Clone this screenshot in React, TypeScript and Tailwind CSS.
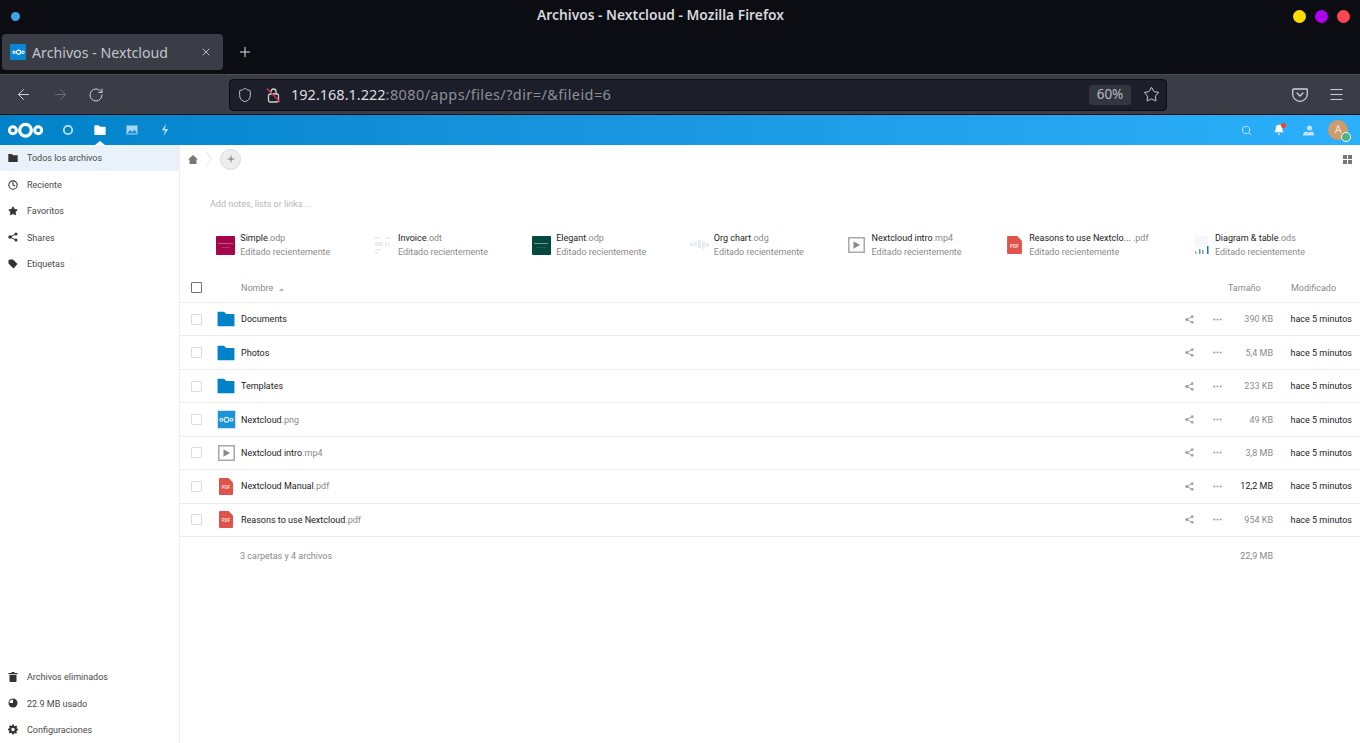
import React from "react";
import { ArrowLeft, ArrowRight, RotateCw, Shield, Star, Menu, Plus, X, Search, Clock, MoreHorizontal } from "lucide-react";

function NcLogo({ w = 38, color = "#fff" }: { w?: number; color?: string }) {
  return (
    <svg width={w} height={w * 0.5} viewBox="0 0 38 19" fill="none" stroke={color}>
      <circle cx="6" cy="9.5" r="3.6" strokeWidth="3" />
      <circle cx="19" cy="9.5" r="6" strokeWidth="3.4" />
      <circle cx="32" cy="9.5" r="3.6" strokeWidth="3" />
    </svg>
  );
}

function Folder({ size = 12, color = "#0082c9" }: { size?: number; color?: string }) {
  return (
    <svg width={size} height={size} viewBox="0 0 16 16" fill={color}>
      <path d="M.5 1.5h5.7L8.2 3.5H15a.5.5 0 0 1 .5.5v10a.5.5 0 0 1-.5.5H1a.5.5 0 0 1-.5-.5z" />
    </svg>
  );
}

function ShareIcon({ size = 10, color = "#a0a0a0" }: { size?: number; color?: string }) {
  return (
    <svg width={size} height={size} viewBox="0 0 10 10" fill={color} stroke={color}>
      <circle cx="8" cy="1.9" r="1.5" strokeWidth="0" />
      <circle cx="8" cy="8.1" r="1.5" strokeWidth="0" />
      <circle cx="2" cy="5" r="1.7" strokeWidth="0" />
      <path d="M8 1.9 2 5l6 3.1" fill="none" strokeWidth="1" />
    </svg>
  );
}

function GearIcon() {
  return (
    <svg width="11" height="11" viewBox="0 0 24 24">
      <path
        fillRule="evenodd"
        fill="#333"
        d="M10 0h4l.7 3.3 2 .8L19.500 2.300l2.800 2.800-1.800 2.800.8 2L24 10v4l-3.300.7-.8 2 1.800 2.800-2.800 2.800-2.800-1.800-2 .8L14 24h-4l-.7-3.300-2-.8-2.800 1.800-2.800-2.800 1.800-2.800-.8-2L0 14v-4l3.300-.7.8-2-1.800-2.800 2.800-2.800 2.800 1.800 2-.8zM12 8a4 4 0 1 0 0 8 4 4 0 0 0 0-8z"
      />
    </svg>
  );
}

function PdfIcon({ w = 14, h = 17 }: { w?: number; h?: number }) {
  return (
    <svg width={w} height={h} viewBox="0 0 14 17">
      <path d="M1 0h8.500L14 4.500V16a1 1 0 0 1-1 1H1a1 1 0 0 1-1-1V1a1 1 0 0 1 1-1z" fill="#e0534a" />
      <text x="7" y="11" textAnchor="middle" fontSize="4.500" fontWeight="700" fill="#fbdcd9" fontFamily="Roboto, sans-serif">PDF</text>
    </svg>
  );
}

function VideoIcon() {
  return (
    <svg width="17" height="16" viewBox="0 0 17 16">
      <rect x="0.75" y="0.75" width="15.5" height="14.5" fill="#fff" stroke="#a8a8a8" strokeWidth="1.5" />
      <path d="M5.500 4.200 12 8l-6.500 3.800z" fill="#8c8c8c" />
    </svg>
  );
}

function PngIcon() {
  return (
    <div className="w-[19px] h-[19px] bg-[#1a93d8] border border-[#cfe4f2] flex items-center justify-center">
      <NcLogo w={15} color="#cdeafb" />
    </div>
  );
}

function SimpleThumb() {
  return (
    <div className="w-[19px] h-[19px] rounded-[1px] bg-[#a5064a] flex flex-col items-center justify-center gap-[3px]">
      <div className="w-[15px] h-px bg-[#c25a86]" />
      <div className="w-[8px] h-px bg-[#b5336b]" />
    </div>
  );
}

function ElegantThumb() {
  return (
    <div className="w-[19px] h-[19px] rounded-[1px] bg-[#04493f] flex flex-col items-center justify-center gap-[3px]">
      <div className="w-[14px] h-px bg-[#6f9c94]" />
      <div className="w-[9px] h-px bg-[#1f6054]" />
    </div>
  );
}

function InvoiceThumb() {
  return (
    <svg width="17" height="19" viewBox="0 0 17 19">
      <g fill="#ececec">
        <rect x="0" y="1" width="6" height="1.500" />
        <rect x="11" y="1" width="5" height="2" />
        <rect x="1" y="6" width="8" height="4" />
        <rect x="11" y="6" width="1.500" height="5" />
        <rect x="14" y="6" width="1.500" height="5" />
        <rect x="1" y="13" width="6" height="1.500" />
        <rect x="1" y="16" width="3" height="2" />
      </g>
    </svg>
  );
}

function OrgThumb() {
  return (
    <svg width="19" height="14" viewBox="0 0 19 14">
      <g fill="#e6e9ee">
        <rect x="0" y="5" width="3" height="3" />
        <rect x="4" y="4" width="3" height="4" />
        <rect x="8" y="2" width="3" height="8" />
        <rect x="12" y="3" width="3" height="8" />
        <rect x="16" y="5" width="3" height="4" />
      </g>
    </svg>
  );
}

function SheetThumb() {
  return (
    <svg width="16" height="19" viewBox="0 0 16 19">
      <rect x="1" y="0" width="13" height="11" fill="#f6f7f8" />
      <rect x="1" y="15" width="1.500" height="3" fill="#e8a33d" />
      <rect x="5" y="13" width="1.500" height="5" fill="#2fa8c9" />
      <rect x="8" y="14" width="1.500" height="4" fill="#9aa0a6" />
      <rect x="13" y="10" width="1.500" height="8" fill="#1b7f9e" />
    </svg>
  );
}

function Recent({ thumb, name, ext }: { thumb: React.ReactNode; name: string; ext: string }) {
  return (
    <div className="flex items-center w-[157.7px] h-[28px] shrink-0">
      <div className="w-[24.3px] h-[20px] flex items-center shrink-0">{thumb}</div>
      <div className="leading-[14px]">
        <div className="text-[9px] text-[#222] whitespace-nowrap">
          {name}
          <span className="text-[#8a8a8a]">{ext}</span>
        </div>
        <div className="text-[9px] text-[#8a8a8a] whitespace-nowrap">Editado recientemente</div>
      </div>
    </div>
  );
}

function Row({ icon, name, ext, size, strong }: { icon: React.ReactNode; name: string; ext: string; size: string; strong?: boolean }) {
  return (
    <div className="flex items-center h-[33.45px] border-b border-[#ededed] pr-[8px]">
      <div className="w-[11px] h-[11px] ml-[11px] border border-[#dcdcdc] rounded-[1px] shrink-0" />
      <div className="w-[20px] ml-[14px] flex justify-center shrink-0">{icon}</div>
      <div className="ml-[5px] pt-[1.5px] text-[9px] text-[#222] flex-1 whitespace-nowrap">
        {name}
        <span className="text-[#8a8a8a]">{ext}</span>
      </div>
      <ShareIcon size={9} />
      <MoreHorizontal size={11} strokeWidth={2.500} className="text-[#a0a0a0] ml-[18px]" />
      <div className={`w-[50px] pt-[1.5px] text-right text-[9px] ${strong ? "text-[#222]" : "text-[#8a8a8a]"}`}>{size}</div>
      <div className="w-[79px] pt-[1.5px] text-right text-[9px] text-[#222] whitespace-nowrap">hace 5 minutos</div>
    </div>
  );
}

function NavItem({ icon, label, active }: { icon: React.ReactNode; label: string; active?: boolean }) {
  return (
    <div className={`flex items-center h-[26.4px] pl-[8px] text-[9px] text-[#4a4a4a] ${active ? "bg-[#e9f2fa]" : ""}`}>
      <div className="w-[10px] flex justify-center items-center shrink-0">{icon}</div>
      <span className="ml-[9px] pt-[2px] whitespace-nowrap">{label}</span>
    </div>
  );
}

export default function App() {
  return (
    <div className="w-[1360px] h-[743px] overflow-hidden flex flex-col bg-white font-['Roboto',sans-serif]">
      {/* Window title */}
      <div className="h-[33px] bg-[#0c0d13] flex items-center justify-between pl-[11px] pr-[10px] shrink-0 font-['Noto_Sans',sans-serif]">
        <div className="w-[9px] h-[9px] rounded-full bg-[#3aa4e6]" />
        <div className="text-[13.8px] font-semibold text-[#d6d8dc] pb-[2px] pl-[8px]">Archivos - Nextcloud - Mozilla Firefox</div>
        <div className="flex gap-[9px]">
          <div className="w-[13px] h-[13px] rounded-full bg-[#fcdc00]" />
          <div className="w-[13px] h-[13px] rounded-full bg-[#b000f0]" />
          <div className="w-[13px] h-[13px] rounded-full bg-[#ff4650]" />
        </div>
      </div>
      {/* Tabs */}
      <div className="h-[41px] bg-[#0c0d13] flex items-start pl-[2px] pt-[1px] shrink-0 font-['Noto_Sans',sans-serif]">
        <div className="w-[221px] h-[36px] rounded-[4px] bg-[#3a3c46] flex items-center pl-[8px] pr-[11px]">
          <div className="w-[16px] h-[16px] bg-[#0a86d2] rounded-[1px] flex items-center justify-center">
            <NcLogo w={13} />
          </div>
          <span className="ml-[6px] pt-[2px] text-[14.2px] text-[#c3c5cb] flex-1 whitespace-nowrap">Archivos - Nextcloud</span>
          <X size={12} className="text-[#b8bac0]" />
        </div>
        <Plus size={16} strokeWidth={1.500} className="text-[#e2e3e6] ml-[14px] mt-[10px]" />
      </div>
      {/* Navigation */}
      <div className="h-[41px] bg-[#3a3c46] border-b border-[#0c0d13] border-t border-t-[#4a4c55] flex items-center shrink-0 font-['Noto_Sans',sans-serif]">
        <ArrowLeft size={17} strokeWidth={1.400} className="text-[#d0d2d7] ml-[15px]" />
        <ArrowRight size={17} strokeWidth={1.400} className="text-[#6d6f77] ml-[20px]" />
        <RotateCw size={16} strokeWidth={1.500} className="text-[#d0d2d7] ml-[19px]" />
        <div className="w-[938px] h-[32px] ml-[125px] rounded-[4px] bg-[#1c1e29] border border-[#0c0d13] flex items-center pl-[7px] pr-[6px]">
          <Shield size={16} strokeWidth={1.400} className="text-[#d0d2d7]" />
          <svg width="16" height="16" viewBox="0 0 16 16" className="ml-[13px]" fill="none">
            <rect x="2.500" y="7" width="10" height="8" rx="1.500" stroke="#d0d2d7" strokeWidth="1.300" />
            <path d="M5 7V4.500a2.500 2.500 0 0 1 5 0V7" stroke="#d0d2d7" strokeWidth="1.300" />
            <path d="M1 1.500 14 15" stroke="#e22850" strokeWidth="1.400" />
          </svg>
          <span className="ml-[9px] text-[14.5px] text-[#dcdee2] whitespace-nowrap">
            192.168.1.222<span className="text-[#8e9097] tracking-[0.4px]">:8080/apps/files/?dir=/&amp;fileid=6</span>
          </span>
          <div className="ml-auto w-[42px] h-[20px] rounded-[3px] bg-[#33353f] flex items-center justify-center text-[13.5px] text-[#b9bbc1]">60%</div>
          <Star size={17} strokeWidth={1.400} className="text-[#d0d2d7] ml-[12px]" />
        </div>
        <svg width="16" height="14" viewBox="0 0 16 14" fill="none" className="ml-[125px]">
          <path d="M1.500 1h13a.8.8 0 0 1 .8.8V6a7.300 7.300 0 0 1-14.600 0V1.800A.8.8 0 0 1 1.500 1z" stroke="#d0d2d7" strokeWidth="1.300" />
          <path d="M5 5l3 3 3-3" stroke="#d0d2d7" strokeWidth="1.300" strokeLinecap="round" />
        </svg>
        <Menu size={17} strokeWidth={1.400} className="text-[#d0d2d7] ml-[20px]" />
      </div>
      {/* Nextcloud header */}
      <div className="h-[30px] shrink-0 flex items-center bg-gradient-to-r from-[#0082c9] to-[#2cb0fb] relative">
        <div className="ml-[7px]"><NcLogo w={37} /></div>
        <svg width="12" height="12" viewBox="0 0 12 12" className="ml-[18px]" fill="none"><circle cx="6" cy="6" r="4.200" stroke="#c2e4f7" strokeWidth="1.800" /></svg>
        <div className="ml-[20px]"><Folder size={12} color="#fff" /></div>
        <svg width="12" height="12" viewBox="0 0 12 12" className="ml-[20px]">
          <rect x="0.5" y="1.500" width="11" height="9" fill="#a8d6f2" />
          <path d="M1 9.500 4 6l2.500 2L8.500 5.500 11 9.500z" fill="#1a8fd6" />
        </svg>
        <svg width="10" height="12" viewBox="0 0 10 12" className="ml-[22px]"><path d="M6 0 1.500 6.500H5L3.500 12 8.500 5H5z" fill="#a8d6f2" /></svg>
        <div className="absolute left-[95px] top-[26px] w-0 h-0 border-l-[5px] border-r-[5px] border-b-[4px] border-l-transparent border-r-transparent border-b-white" />
        <div className="ml-auto flex items-center pr-[12px]">
          <Search size={11} strokeWidth={2} className="text-[#cbe9fc]" />
          <div className="ml-[22px] relative">
            <svg width="10" height="12" viewBox="0 0 10 12"><path d="M5 .8a3.200 3.200 0 0 1 3.200 3.200c0 2.400.9 3.600 1.400 4.200H.4C.9 7.600 1.800 6.400 1.800 4A3.200 3.200 0 0 1 5 .8zM3.700 9.600h2.600L5 11.300z" fill="#fff" /></svg>
            <div className="absolute -top-[1px] right-[-2px] w-[5px] h-[5px] rounded-full bg-[#f0461e]" />
          </div>
          <svg width="11" height="11" viewBox="0 0 11 11" className="ml-[19px]">
            <circle cx="6.500" cy="3" r="2.600" fill="#c0e4fb" />
            <path d="M0 10.500c0-2.500 1-3.600 3-4 1 1 5 1 6 0 1.500.5 2 2 2 4z" fill="#c0e4fb" />
          </svg>
          <div className="ml-[14px] relative w-[20px] h-[20px] rounded-full bg-[#cd9b6c] flex items-center justify-center text-[11px] text-[#f5e6d8]">
            A
            <div className="absolute -right-[3px] -bottom-[2px] w-[10px] h-[10px] rounded-full bg-[#49b382] border border-white" />
          </div>
        </div>
      </div>
      {/* Body */}
      <div className="flex flex-1 min-h-0">
        <aside className="w-[180px] border-r border-[#ededed] flex flex-col justify-between shrink-0">
          <div>
            <NavItem active label="Todos los archivos" icon={<Folder size={10} color="#333" />} />
            <NavItem label="Reciente" icon={<Clock size={10} strokeWidth={2.600} className="text-[#333]" />} />
            <NavItem label="Favoritos" icon={<Star size={10} className="text-[#333]" fill="#333" />} />
            <NavItem label="Shares" icon={<ShareIcon size={10} color="#333" />} />
            <NavItem label="Etiquetas" icon={
              <svg width="10" height="10" viewBox="0 0 10 10"><path d="M0.5 1.500 1.500.5h3.500L9.500 5 5.500 9.500 .5 4.500z" fill="#333" /></svg>
            } />
          </div>
          <div>
            <NavItem label="Archivos eliminados" icon={
              <svg width="10" height="10" viewBox="0 0 10 10"><path d="M3.500 0h3v1H9.500v1.200H.5V1h3zM1.500 3h7v6a1 1 0 0 1-1 1h-5a1 1 0 0 1-1-1z" fill="#333" /></svg>
            } />
            <NavItem label="22.9 MB usado" icon={
              <svg width="10" height="10" viewBox="0 0 10 10"><circle cx="5" cy="5" r="4.500" fill="#333" /><path d="M5 1.500V5H1.500A3.500 3.500 0 0 1 5 1.500z" fill="#fff" /></svg>
            } />
            <NavItem label="Configuraciones" icon={<GearIcon />} />
          </div>
        </aside>
        <main className="flex-1 min-w-0">
          {/* Breadcrumb */}
          <div className="h-[28px] flex items-center pl-[8px] pr-[8px]">
            <svg width="10" height="9" viewBox="0 0 10 9"><path d="M5 0 10 4.500H8.500V9h-7V4.500H0z" fill="#777" /></svg>
            <svg width="6" height="16" viewBox="0 0 6 16" className="ml-[8px]" fill="none"><path d="M.5.5 5 8 .5 15.500" stroke="#e6e6e6" /></svg>
            <div className="ml-[8px] w-[21px] h-[21px] rounded-full bg-[#ededed] border border-[#dbdbdb] flex items-center justify-center">
              <Plus size={10} strokeWidth={1.800} className="text-[#555]" />
            </div>
            <div className="ml-auto grid grid-cols-2 gap-[1px]">
              <div className="w-[4px] h-[4px] bg-[#777]" /><div className="w-[4px] h-[4px] bg-[#777]" />
              <div className="w-[4px] h-[4px] bg-[#777]" /><div className="w-[4px] h-[4px] bg-[#777]" />
            </div>
          </div>
          <div className="pl-[30px] pt-[25px] text-[9px] leading-[12px] text-[#b8b8b8]">Add notes, lists or links ...</div>
          {/* Recents */}
          <div className="flex pl-[36px] mt-[21px]">
            <Recent thumb={<SimpleThumb />} name="Simple" ext=".odp" />
            <Recent thumb={<InvoiceThumb />} name="Invoice" ext=".odt" />
            <div className="pl-[0.5px]"><Recent thumb={<ElegantThumb />} name="Elegant" ext=".odp" /></div>
            <Recent thumb={<OrgThumb />} name="Org chart" ext=".odg" />
            <Recent thumb={<div className="pl-[1px]"><VideoIcon /></div>} name="Nextcloud intro" ext=".mp4" />
            <Recent thumb={<div className="pl-[2px]"><PdfIcon w={15} h={18} /></div>} name="Reasons to use Nextclo..." ext=" .pdf" />
            <div className="ml-[28px]"><Recent thumb={<div className="pl-[3px]"><SheetThumb /></div>} name="Diagram &amp; table" ext=".ods" /></div>
          </div>
          {/* Table header */}
          <div className="flex items-center h-[30px] mt-[14px] border-b border-[#ededed] pr-[8px] text-[9px] text-[#8a8a8a]">
            <div className="w-[11px] h-[11px] ml-[11px] border border-[#6e6e6e] rounded-[1px] shrink-0" />
            <div className="ml-[39px] pt-[1.5px] flex-1 flex items-center">
              Nombre
              <svg width="5" height="3" viewBox="0 0 5 3" className="ml-[6px] mt-[2px]"><path d="M2.500 0 5 3H0z" fill="#b5b5b5" /></svg>
            </div>
            <div className="w-[63px] pt-[1.5px]">Tamaño</div>
            <div className="w-[61px] pt-[1.5px] whitespace-nowrap">Modificado</div>
          </div>
          <Row icon={<Folder size={18} />} name="Documents" ext="" size="390 KB" />
          <Row icon={<Folder size={18} />} name="Photos" ext="" size="5,4 MB" />
          <Row icon={<Folder size={18} />} name="Templates" ext="" size="233 KB" />
          <Row icon={<PngIcon />} name="Nextcloud" ext=".png" size="49 KB" />
          <Row icon={<VideoIcon />} name="Nextcloud intro" ext=".mp4" size="3,8 MB" />
          <Row icon={<PdfIcon />} name="Nextcloud Manual" ext=".pdf" size="12,2 MB" strong />
          <Row icon={<PdfIcon />} name="Reasons to use Nextcloud" ext=".pdf" size="954 KB" />
          <div className="flex items-center h-[38px] pt-[1px] pr-[87px] text-[9px] text-[#8a8a8a]">
            <div className="ml-[60px] flex-1">3 carpetas y 4 archivos</div>
            <div>22,9 MB</div>
          </div>
        </main>
      </div>
    </div>
  );
}
